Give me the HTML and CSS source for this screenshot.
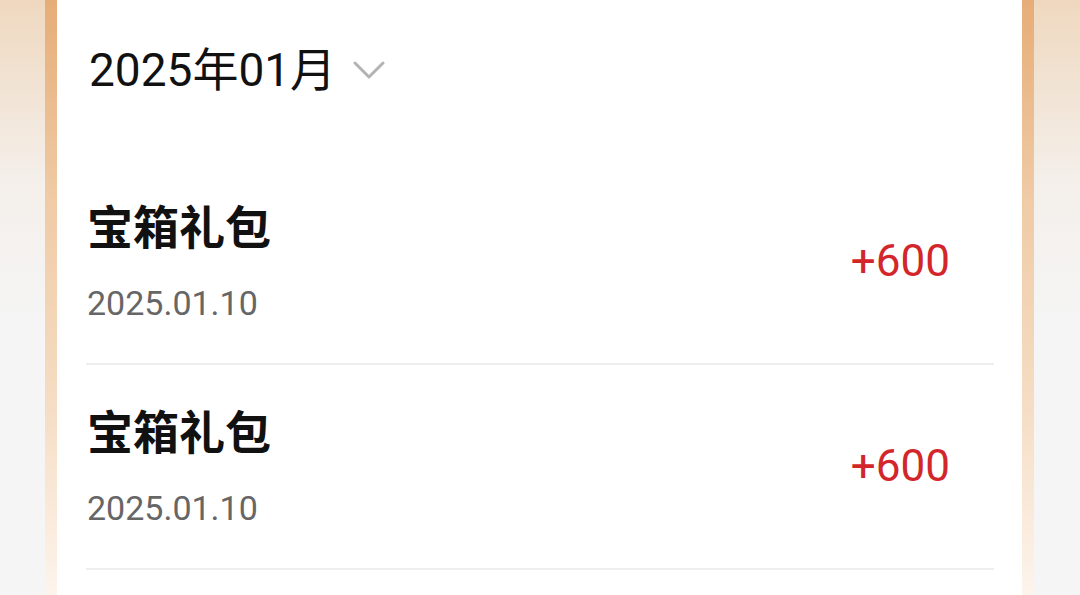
FILE: index.html
```html
<!DOCTYPE html>
<html lang="zh-CN">
  <head>
    <meta charset="UTF-8" />
    <meta name="viewport" content="width=device-width, initial-scale=1.0" />
    <title>积分明细</title>
    <link rel="stylesheet" href="styles.css">
  </head>
  <body>
    <div class="shell">
      <div class="card">
        <div class="month">
          <span class="month-label">2025年01月</span>
          <svg class="chevron" width="32" height="20" viewBox="0 0 32 20">
            <polyline points="2,3 16,17 30,3" fill="none" stroke="#b3b3b3" stroke-width="3" stroke-linecap="round" stroke-linejoin="round" />
          </svg>
        </div>

        <ul class="records">
          <li class="record">
            <div class="info">
              <div class="name">宝箱礼包</div>
              <div class="date">2025.01.10</div>
            </div>
            <div class="amount">+600</div>
          </li>
          <li class="record">
            <div class="info">
              <div class="name">宝箱礼包</div>
              <div class="date">2025.01.10</div>
            </div>
            <div class="amount">+600</div>
          </li>
        </ul>
      </div>
    </div>
  </body>
</html>
```

FILE: styles.css
```css
body {
  margin: 0;
  font-family: Roboto, "Noto Sans CJK SC", sans-serif;
  background: linear-gradient(#efd8bf 0, #f4efea 180px, #f5f5f5 320px);
  height: 595px;
  overflow: hidden;
}

.shell {
  margin: 0 46px 0 45px;
  padding: 0 12px;
  background: linear-gradient(#e6ad77 0, #efcba6 200px, #f5dcc3 400px, #fdf4ec 595px);
  height: 595px;
}

.card {
  background: #fff;
  height: 595px;
}

.month {
  display: flex;
  align-items: center;
  padding: 40px 0 60px 32px;
  height: 60px;
}

.month-label {
  font-size: 46px;
  line-height: 60px;
  color: #111;
}

.chevron {
  margin-left: 17px;
}

.records {
  list-style: none;
  margin: 0 28px 0 29px;
  padding: 0;
}

.record {
  display: flex;
  align-items: center;
  justify-content: space-between;
  padding: 39px 0 40px;
  border-bottom: 2px solid #eeeeee;
}

.info {
  padding-left: 1px;
}

.name {
  font-family: "Noto Sans CJK SC", sans-serif;
  font-size: 46px;
  font-weight: bold;
  line-height: 50px;
  color: #111;
}

.date {
  margin-top: 34px;
  font-size: 34px;
  line-height: 40px;
  color: #666;
}

.amount {
  margin-right: 44px;
  font-size: 44px;
  line-height: 48px;
  color: #d3262b;
}
```
